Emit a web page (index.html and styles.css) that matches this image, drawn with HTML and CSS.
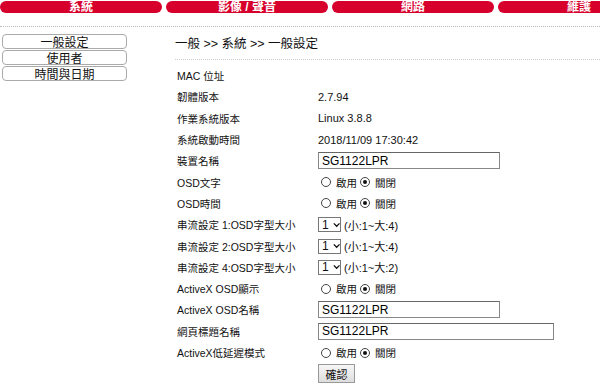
FILE: index.html
```html
<!DOCTYPE html>
<html lang="zh-Hant">
<head>
  <meta charset="UTF-8">
  <title>一般設定</title>
  <link rel="stylesheet" href="styles.css">
</head>
<body>
  <!-- 主選單 -->
  <nav class="top-tabs">
    <a class="tab">系統</a>
    <a class="tab">影像 / 聲音</a>
    <a class="tab">網路</a>
    <a class="tab">維護</a>
  </nav>
  <div class="dots top-dots"></div>

  <div class="page">
    <!-- 左側子選單 -->
    <aside class="side-menu">
      <a class="side-btn">一般設定</a>
      <a class="side-btn">使用者</a>
      <a class="side-btn">時間與日期</a>
    </aside>

    <!-- 設定內容 -->
    <main class="content">
      <h1 class="crumb">一般 &gt;&gt; 系統 &gt;&gt; 一般設定</h1>
      <div class="dots crumb-dots"></div>

      <table class="form">
        <tr><td class="lbl">MAC 位址</td><td></td></tr>
        <tr><td class="lbl">韌體版本</td><td class="val">2.7.94</td></tr>
        <tr><td class="lbl">作業系統版本</td><td class="val">Linux 3.8.8</td></tr>
        <tr><td class="lbl">系統啟動時間</td><td class="val">2018/11/09 17:30:42</td></tr>
        <tr><td class="lbl">裝置名稱</td><td><input class="txt" type="text" value="SG1122LPR"></td></tr>
        <tr>
          <td class="lbl">OSD文字</td>
          <td><span class="radio"></span><span class="opt">啟用</span><span class="radio on"></span><span class="opt">關閉</span></td>
        </tr>
        <tr>
          <td class="lbl">OSD時間</td>
          <td><span class="radio"></span><span class="opt">啟用</span><span class="radio on"></span><span class="opt">關閉</span></td>
        </tr>
        <tr>
          <td class="lbl">串流設定 1:OSD字型大小</td>
          <td><span class="sel">1<svg width="9" height="6" viewBox="0 0 9 6"><path d="M1 1l3.5 3.5L8 1" fill="none" stroke="#111" stroke-width="1.6"/></svg></span><span class="hint">(小:1~大:4)</span></td>
        </tr>
        <tr>
          <td class="lbl">串流設定 2:OSD字型大小</td>
          <td><span class="sel">1<svg width="9" height="6" viewBox="0 0 9 6"><path d="M1 1l3.5 3.5L8 1" fill="none" stroke="#111" stroke-width="1.6"/></svg></span><span class="hint">(小:1~大:4)</span></td>
        </tr>
        <tr>
          <td class="lbl">串流設定 4:OSD字型大小</td>
          <td><span class="sel">1<svg width="9" height="6" viewBox="0 0 9 6"><path d="M1 1l3.5 3.5L8 1" fill="none" stroke="#111" stroke-width="1.6"/></svg></span><span class="hint">(小:1~大:2)</span></td>
        </tr>
        <tr>
          <td class="lbl">ActiveX OSD顯示</td>
          <td><span class="radio"></span><span class="opt">啟用</span><span class="radio on"></span><span class="opt">關閉</span></td>
        </tr>
        <tr><td class="lbl">ActiveX OSD名稱</td><td><input class="txt" type="text" value="SG1122LPR"></td></tr>
        <tr><td class="lbl">網頁標題名稱</td><td><input class="txt wide" type="text" value="SG1122LPR"></td></tr>
        <tr>
          <td class="lbl">ActiveX低延遲模式</td>
          <td><span class="radio"></span><span class="opt">啟用</span><span class="radio on"></span><span class="opt">關閉</span></td>
        </tr>
        <tr><td></td><td><button class="ok">確認</button></td></tr>
      </table>
    </main>
  </div>
</body>
</html>
```

FILE: styles.css
```css
/* 基本 */
* {
  margin: 0;
  padding: 0;
  box-sizing: border-box;
}

body {
  font-family: "Liberation Sans", "Noto Sans CJK TC", sans-serif;
  font-size: 11px;
  color: #111;
  background: #fff;
  width: 600px;
  height: 384px;
  overflow: hidden;
}

/* 主選單 */
.top-tabs {
  display: flex;
  gap: 4px;
  padding-top: 1px;
  overflow: hidden;
}

.tab {
  flex: 0 0 162px;
  height: 12px;
  background: #d7002d;
  border-radius: 6px;
  color: #fff;
  font-weight: bold;
  font-size: 12px;
  line-height: 12px;
  text-align: center;
}

.dots {
  border-top: 1px dotted #bbb;
}

.top-dots {
  margin-top: 13px;
}

/* 版面 */
.page {
  display: flex;
  padding-top: 7px;
}

.side-menu {
  width: 125px;
  margin-left: 2px;
  display: flex;
  flex-direction: column;
  gap: 1px;
}

.side-btn {
  height: 15px;
  border: 1px solid #aaa;
  border-radius: 4px;
  font-family: "Noto Sans CJK TC", sans-serif;
  font-size: 12px;
  line-height: 13px;
  text-align: center;
  color: #111;
}

.content {
  margin-left: 48px;
  flex: 1;
}

.crumb {
  font-family: "Liberation Sans", "Noto Sans CJK TC", sans-serif;
  font-size: 12.5px;
  font-weight: normal;
  line-height: 16px;
  padding-top: 2px;
}

.crumb-dots {
  margin-top: 7px;
  border-top-color: #ccc;
}

/* 表單 */
.form {
  border-collapse: collapse;
  margin-top: 5px;
}

.form td {
  height: 21.3px;
  padding: 0;
  vertical-align: middle;
  white-space: nowrap;
}

.lbl {
  width: 143px;
  padding-left: 2px !important;
  font-size: 10.5px;
}

.val {
  font-size: 11px;
}

.txt {
  width: 182px;
  height: 17px;
  border: 1px solid #888;
  border-top-color: #666;
  font-family: "Liberation Sans", sans-serif;
  font-size: 12px;
  padding: 0 3px;
  color: #000;
  vertical-align: middle;
}

.txt.wide {
  width: 236px;
}

.radio {
  display: inline-block;
  width: 10px;
  height: 10px;
  border: 1px solid #444;
  border-radius: 50%;
  vertical-align: middle;
  margin: 0 5px 0 3px;
  position: relative;
}

.radio.on::after {
  content: "";
  position: absolute;
  left: 2px;
  top: 2px;
  width: 4px;
  height: 4px;
  border-radius: 50%;
  background: #111;
}

.opt {
  font-size: 10.5px;
  vertical-align: middle;
}

.sel {
  display: inline-flex;
  align-items: center;
  gap: 4px;
  height: 15px;
  width: 23px;
  border: 1px solid #777;
  padding-left: 3px;
  font-size: 12px;
  vertical-align: middle;
}

.hint {
  margin-left: 3px;
  font-size: 11px;
  vertical-align: middle;
}

.ok {
  width: 37px;
  height: 19px;
  border: 1px solid #999;
  background: linear-gradient(#f6f6f6, #dedede);
  font-family: "Noto Sans CJK TC", sans-serif;
  font-size: 11px;
  color: #111;
  vertical-align: middle;
}
```
